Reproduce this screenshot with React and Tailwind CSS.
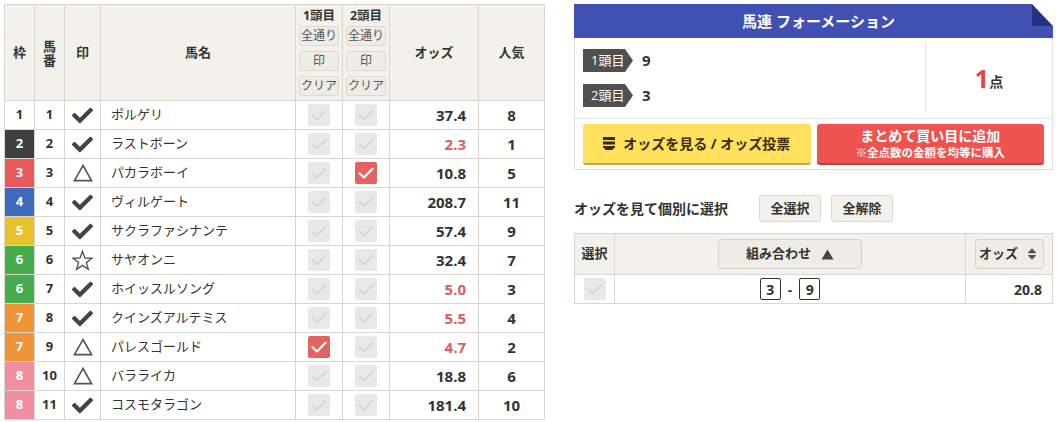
import React from "react";
import { FaCheck, FaSort } from "react-icons/fa";

const FRAME = {
  1: "bg-white text-[#333]",
  2: "bg-[#3f3f3f] text-white",
  3: "bg-[#e9585a] text-white",
  4: "bg-[#3e6bbd] text-white",
  5: "bg-[#e8c22c] text-white",
  6: "bg-[#45ad4d] text-white",
  7: "bg-[#ef9538] text-white",
  8: "bg-[#f08fa0] text-white",
};

const ROWS = [
  [1, 1, "check", "ポルゲリ", false, false, "37.4", false, 8],
  [2, 2, "check", "ラストボーン", false, false, "2.3", true, 1],
  [3, 3, "tri", "パカラボーイ", false, true, "10.8", false, 5],
  [4, 4, "check", "ヴィルゲート", false, false, "208.7", false, 11],
  [5, 5, "check", "サクラファシナンテ", false, false, "57.4", false, 9],
  [6, 6, "star", "サヤオンニ", false, false, "32.4", false, 7],
  [6, 7, "check", "ホイッスルソング", false, false, "5.0", true, 3],
  [7, 8, "check", "クインズアルテミス", false, false, "5.5", true, 4],
  [7, 9, "tri", "パレスゴールド", true, false, "4.7", true, 2],
  [8, 10, "tri", "バラライカ", false, false, "18.8", false, 6],
  [8, 11, "check", "コスモタラゴン", false, false, "181.4", false, 10],
];

function Box({ on }) {
  return (
    <div
      className={
        on
          ? "w-[22px] h-[22px] rounded-[2px] bg-[#e36262] flex items-center justify-center"
          : "w-[22px] h-[22px] rounded-[2px] bg-[#e8e8e8] flex items-center justify-center"
      }
    >
      <svg width="16" height="16" viewBox="0 0 16 16">
        <path
          d="M1.5 8.2 L6 12.5 L14.5 3.8"
          fill="none"
          stroke={on ? "#ffffff" : "#d0d0d0"}
          strokeWidth={on ? 2.2 : 1.4}
          strokeLinecap="round"
          strokeLinejoin="round"
        />
      </svg>
    </div>
  );
}

function Mark({ type }) {
  if (type === "check") return <FaCheck size={21} color="#444" />;
  if (type === "tri")
    return (
      <svg width="20" height="18" viewBox="0 0 20 18">
        <polygon points="10,1.5 18.6,16.6 1.4,16.6" fill="none" stroke="#555" strokeWidth="1.6" strokeLinejoin="miter" />
      </svg>
    );
  return (
    <svg width="21" height="21" viewBox="0 0 20 20">
      <polygon
        points="10,1.3 12.29,7.65 19.03,7.86 13.71,12 15.58,18.49 10,14.7 4.42,18.49 6.29,12 0.97,7.86 7.71,7.65"
        fill="none"
        stroke="#555"
        strokeWidth="1.3"
        strokeLinejoin="miter"
      />
    </svg>
  );
}

function HeadBtn({ children }) {
  return (
    <div className="w-[40px] h-[20px] rounded-[3px] border border-[#dcd9d1] bg-[#eeece7] flex items-center justify-center text-[12px] font-normal text-[#555] whitespace-nowrap leading-none">
      {children}
    </div>
  );
}

function PickHead({ label }) {
  return (
    <div className="h-[96px] border-r border-b border-[#d9d6cc] bg-[#f3f1ec] flex flex-col items-center pt-[2px]">
      <div className="h-[19px] flex items-center text-[12.5px] font-bold leading-none">{label}</div>
      <div className="flex flex-col gap-[5px]">
        <HeadBtn>全通り</HeadBtn>
        <HeadBtn>印</HeadBtn>
        <HeadBtn>クリア</HeadBtn>
      </div>
    </div>
  );
}

function Tag({ children }) {
  return (
    <div className="w-[50px] h-[23px] bg-[#505050] text-white text-[13px] leading-none flex items-center pl-[8px] [clip-path:polygon(0_0,42px_0,100%_50%,42px_100%,0_100%)]">
      {children}
    </div>
  );
}

export default function App() {
  const hc = "h-[96px] border-r border-b border-[#d9d6cc] bg-[#f3f1ec] flex items-center justify-center font-bold text-[13px]";
  const cell = "h-[29px] border-r border-b border-[#d9d6cc] flex items-center";
  return (
    <div className="flex items-start pt-[4px] pl-[4px] bg-white min-h-[422px] text-[#333] font-['Open_Sans','Noto_Sans_CJK_JP',sans-serif]">
      {/* left table */}
      <div className="w-[541px] border-l border-t border-[#d9d6cc] grid grid-cols-[30px_30px_36px_195px_47px_47px_89px_66px]">
        <div className={hc}>枠</div>
        <div className={hc}>
          <div className="flex flex-col items-center leading-[14px]">
            <span>馬</span>
            <span>番</span>
          </div>
        </div>
        <div className={hc}>印</div>
        <div className={hc}>馬名</div>
        <PickHead label="1頭目" />
        <PickHead label="2頭目" />
        <div className={hc}>オッズ</div>
        <div className={hc}>人気</div>

        {ROWS.map(([w, n, m, name, a, b, odds, red, pop]) => (
          <React.Fragment key={n}>
            <div className={`${cell} justify-center font-bold text-[13px] ${FRAME[w]}`}>{w}</div>
            <div className={`${cell} justify-center font-bold text-[13px]`}>{n}</div>
            <div className={`${cell} justify-center`}>
              <Mark type={m} />
            </div>
            <div className={`${cell} pl-[10px] text-[13px]`}>{name}</div>
            <div className={`${cell} justify-center`}>
              <Box on={a} />
            </div>
            <div className={`${cell} justify-center`}>
              <Box on={b} />
            </div>
            <div className={`${cell} justify-end pr-[12px] font-bold text-[15px] ${red ? "text-[#e05a5c]" : "text-[#333]"}`}>
              {odds}
            </div>
            <div className={`${cell} justify-center font-bold text-[15px]`}>{pop}</div>
          </React.Fragment>
        ))}
      </div>

      {/* right panel */}
      <div className="ml-[29px] w-[479px]">
        <div className="relative h-[34px] bg-[#4151b3] flex items-center justify-center text-white font-bold text-[15px] pl-[10px]">
          馬連 フォーメーション
          <svg className="absolute top-0 right-0" width="21" height="22" viewBox="0 0 21 22">
            <polygon points="0,0 0,22 21,22" fill="#253282" />
            <polygon points="0,0 21,0 21,22" fill="#ffffff" />
          </svg>
        </div>
        <div className="border-x border-b border-[#dedede]">
          <div className="flex h-[80px]">
            <div className="flex-1 flex flex-col justify-center gap-[12px] pl-[8px]">
              <div className="flex items-center gap-[9px]">
                <Tag>1頭目</Tag>
                <span className="text-[15px] font-bold">9</span>
              </div>
              <div className="flex items-center gap-[9px]">
                <Tag>2頭目</Tag>
                <span className="text-[15px] font-bold">3</span>
              </div>
            </div>
            <div className="w-[127px] my-[6px] border-l border-[#e3e3e3] flex items-center justify-center">
              <span className="text-[25px] font-bold text-[#e8443f] leading-none">1</span>
              <span className="text-[14px] font-bold mt-[6px]">点</span>
            </div>
          </div>
          <div className="border-t border-[#e3e3e3] flex gap-[6px] px-[8px] pt-[5px] pb-[4px]">
            <div className="flex-1 h-[41px] rounded-[3px] bg-[#ffe15d] border-b-2 border-[#c5a443] flex items-center justify-center gap-[8px] text-[14px] font-bold text-[#3b2a05]">
              <svg width="12" height="13" viewBox="0 0 12 13">
                <rect x="0" y="0" width="12" height="3" fill="#3b2a05" />
                <rect x="0" y="4.5" width="12" height="3" fill="#3b2a05" />
                <path d="M0 9 H12 V10.3 L9.2 13 H2.8 L0 10.3 Z" fill="#3b2a05" />
              </svg>
              <span>オッズを見る / オッズ投票</span>
            </div>
            <div className="flex-1 h-[41px] rounded-[3px] bg-[#ee5350] border-b-2 border-[#c03c3a] flex flex-col items-center justify-center text-white font-bold">
              <span className="text-[14px] leading-[18px]">まとめて買い目に追加</span>
              <span className="text-[11.5px] leading-[15px]">※全点数の金額を均等に購入</span>
            </div>
          </div>
        </div>

        <div className="mt-[25px] flex items-center">
          <span className="text-[14px] font-bold text-[#333]">オッズを見て個別に選択</span>
          <div className="ml-[31px] w-[62px] h-[27px] rounded-[3px] border border-[#dcd9d1] bg-[#f3f1ec] flex items-center justify-center text-[13px] font-bold">
            全選択
          </div>
          <div className="ml-[10px] w-[62px] h-[27px] rounded-[3px] border border-[#dcd9d1] bg-[#f3f1ec] flex items-center justify-center text-[13px] font-bold">
            全解除
          </div>
        </div>

        <div className="mt-[11px] w-[479px] border-l border-t border-[#dad7cf] grid grid-cols-[40px_351px_87px]">
          <div className="h-[41px] border-r border-b border-[#dad7cf] bg-[#f3f1ec] flex items-center justify-center text-[13px] font-bold">
            選択
          </div>
          <div className="h-[41px] border-r border-b border-[#dad7cf] bg-[#f3f1ec] flex items-center justify-center">
            <div className="w-[144px] h-[30px] rounded-[3px] border border-[#d6d3cb] bg-[#eeece7] flex items-center justify-center gap-[10px] text-[13px] font-bold">
              <span>組み合わせ</span>
              <svg width="13" height="11" viewBox="0 0 13 11">
                <polygon points="6.5,0.5 12.5,10.5 0.5,10.5" fill="#444" />
              </svg>
            </div>
          </div>
          <div className="h-[41px] border-r border-b border-[#dad7cf] bg-[#f3f1ec] flex items-center justify-center">
            <div className="w-[69px] h-[30px] rounded-[3px] border border-[#d6d3cb] bg-[#eeece7] flex items-center justify-center gap-[7px] text-[13px] font-bold">
              <span>オッズ</span>
              <FaSort size={14} color="#555" />
            </div>
          </div>
          <div className="h-[29px] border-r border-b border-[#dad7cf] flex items-center justify-center">
            <Box on={false} />
          </div>
          <div className="h-[29px] border-r border-b border-[#dad7cf] flex items-center justify-center gap-[7px] font-bold text-[14px]">
            <div className="w-[21px] h-[22px] border border-[#333] rounded-[2px] flex items-center justify-center">3</div>
            <span>-</span>
            <div className="w-[21px] h-[22px] border border-[#333] rounded-[2px] flex items-center justify-center">9</div>
          </div>
          <div className="h-[29px] border-r border-b border-[#dad7cf] flex items-center justify-end pr-[10px] font-bold text-[14px]">
            20.8
          </div>
        </div>
      </div>
    </div>
  );
}
